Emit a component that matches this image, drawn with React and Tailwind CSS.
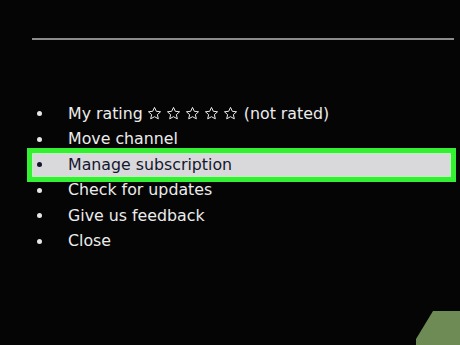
import React from "react";

function Star() {
  return (
    <svg width="15" height="15" viewBox="0 0 24 24" className="shrink-0">
      <path
        d="M12 2.2l2.9 6.3 6.8.7-5.1 4.6 1.5 6.7L12 17.1l-6.1 3.4 1.5-6.7-5.1-4.6 6.8-.7z"
        fill="none"
        stroke="#ececec"
        strokeWidth="1.6"
        strokeLinejoin="round"
      />
    </svg>
  );
}

function Item({ children }) {
  return (
    <div className="h-[25.5px] flex items-center text-[#ececec]">
      <div className="w-[68px] flex shrink-0">
        <span className="ml-[37px] w-[5px] h-[5px] rounded-full bg-[#e6e6e6]" />
      </div>
      {children}
    </div>
  );
}

export default function App() {
  return (
    <div
      className="relative w-[460px] h-[345px] overflow-hidden bg-[#050505]"
      style={{ fontFamily: '"DejaVu Sans", sans-serif' }}
    >
      <div className="pt-[38px] pl-[32px] pr-[6px]">
        <div className="h-[2px] bg-[#8c8c8c]" />
      </div>
      <div className="mt-[61px] flex flex-col text-[15.8px] leading-none">
        <Item>
          <span>My rating</span>
          <span className="flex items-center gap-[4px] ml-[4px] mr-[6px]">
            <Star />
            <Star />
            <Star />
            <Star />
            <Star />
          </span>
          <span>(not rated)</span>
        </Item>
        <Item>Move channel</Item>
        <div className="h-[25.5px] flex items-center">
          <div className="ml-[27px] w-[429px] h-[34px] shrink-0 bg-[#33f033] p-[5px]">
            <div className="h-full bg-[#d9d9db] border border-[#b8f5b8] flex items-center text-[#161630]">
              <span className="ml-[4px] w-[5px] h-[5px] rounded-full bg-[#161630]" />
              <span className="ml-[26px]">Manage subscription</span>
            </div>
          </div>
        </div>
        <Item>Check for updates</Item>
        <Item>Give us feedback</Item>
        <Item>Close</Item>
      </div>
      <svg className="absolute right-0 bottom-0" width="44" height="34" viewBox="0 0 44 34">
        <polygon points="17,0 44,0 44,34 0,34 0,28" fill="#6e8a55" />
      </svg>
    </div>
  );
}
